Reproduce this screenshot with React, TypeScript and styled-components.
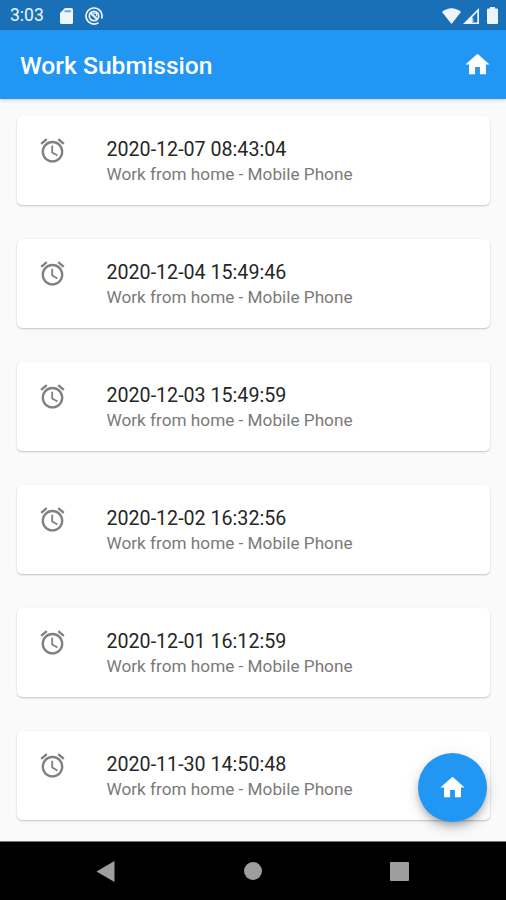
import React from "react";
import styled, { createGlobalStyle } from "styled-components";

const GlobalStyle = createGlobalStyle`
  * { box-sizing: border-box; }
  html, body { margin: 0; padding: 0; }
  body { background: #fafafa; font-family: Roboto, sans-serif; }
`;

const Screen = styled.div`
  position: relative;
  display: flex;
  flex-direction: column;
  width: 506px;
  height: 900px;
  overflow: hidden;
  background: #fafafa;
`;

const StatusBar = styled.div`
  display: flex;
  flex: none;
  align-items: center;
  justify-content: space-between;
  height: 30px;
  padding: 1px 8px 0 10px;
  background: #1a70b7;
  color: #edf5fb;
`;

const StatusGroup = styled.div`
  display: flex;
  align-items: center;
`;

const Clock = styled.span`
  width: 50px;
  font-size: 17.5px;
  line-height: 29px;
`;

const Glyph = styled.svg<{ $w: number; $h: number; $gap?: number }>`
  display: block;
  flex: none;
  width: ${(p) => p.$w}px;
  height: ${(p) => p.$h}px;
  margin-left: ${(p) => p.$gap ?? 0}px;
  fill: currentColor;
`;

const AppBar = styled.header`
  position: relative;
  display: flex;
  flex: none;
  align-items: center;
  justify-content: space-between;
  height: 69px;
  padding: 0 14px 0 20px;
  background: #2196f3;
  color: #fff;
  box-shadow: 0 1px 4px rgba(0, 0, 0, 0.2);
`;

const Title = styled.h1`
  margin: 0;
  padding-top: 2px;
  font-size: 24.65px;
  font-weight: 500;
  line-height: 32px;
`;

const List = styled.main`
  display: flex;
  flex: 1;
  flex-direction: column;
  gap: 34px;
  min-height: 0;
  padding: 17px 16px 0 17px;
  overflow: hidden;
`;

const Card = styled.article`
  display: flex;
  flex: none;
  height: 89px;
  padding: 20px 20.5px 0;
  background: #fff;
  border-radius: 5px;
  box-shadow: 0 1px 2px rgba(0, 0, 0, 0.22), 0 0 1px rgba(0, 0, 0, 0.04);
`;

const CardIcon = styled.div`
  width: 69px;
  color: #808080;
`;

const When = styled.div`
  padding-top: 1px;
  color: #262626;
  font-size: 19.65px;
  line-height: 26px;
`;

const Note = styled.div`
  color: #7a7a7a;
  font-size: 17.2px;
  line-height: 23px;
`;

const Fab = styled.button`
  position: absolute;
  right: 19px;
  bottom: 78px;
  display: flex;
  align-items: center;
  justify-content: center;
  width: 69px;
  height: 69px;
  padding: 0;
  border: 0;
  border-radius: 50%;
  background: #2196f3;
  color: #fff;
  box-shadow: 0 4px 6px -1px rgba(0, 0, 0, 0.2), 0 7px 12px rgba(0, 0, 0, 0.14),
    0 1px 20px rgba(0, 0, 0, 0.06);
`;

const NavBar = styled.nav`
  display: flex;
  flex: none;
  align-items: center;
  justify-content: space-between;
  height: 59px;
  padding: 0 97px 0 96px;
  border-top: 1px solid #777;
  background: #000;
  color: #9e9e9e;
`;

const entries = [
  "2020-12-07 08:43:04",
  "2020-12-04 15:49:46",
  "2020-12-03 15:49:59",
  "2020-12-02 16:32:56",
  "2020-12-01 16:12:59",
  "2020-11-30 14:50:48",
];

const HomeIcon = () => (
  <Glyph $w={29} $h={29} viewBox="0 0 24 24">
    <path d="M10 20v-6h4v6h5v-8h3L12 3 2 12h3v8z" />
  </Glyph>
);

const AlarmIcon = () => (
  <Glyph $w={29} $h={29} viewBox="0 0 24 24">
    <path d="M22 5.72l-4.6-3.86-1.29 1.53 4.6 3.86L22 5.72zM7.88 3.39L6.6 1.86 2 5.71l1.29 1.53 4.59-3.85zM12.5 8H11v6l4.75 2.85.75-1.23-4-2.37V8zM12 4c-4.97 0-9 4.03-9 9s4.02 9 9 9c4.97 0 9-4.03 9-9s-4.03-9-9-9zm0 16c-3.87 0-7-3.13-7-7s3.13-7 7-7 7 3.13 7 7-3.13 7-7 7z" />
  </Glyph>
);

export default function App() {
  return (
    <Screen>
      <GlobalStyle />
      <StatusBar>
        <StatusGroup>
          <Clock>3:03</Clock>
          <Glyph $w={13} $h={16} viewBox="0 0 13 16">
            <path d="M5 0h6.500Q13 0 13 1.500V14.500Q13 16 11.500 16H1.500Q0 16 0 14.500V5z" />
            <path d="M5 2.200h6v2H4z" fill="#1a70b7" opacity=".6" />
          </Glyph>
          <Glyph $w={18} $h={18} $gap={12} viewBox="0 0 18 18">
            <g fill="none" stroke="currentColor">
              <path d="M13.500 15.600A8 8 0 1 1 16.600 11.500" strokeWidth="1.700" />
              <circle cx="9" cy="9" r="4.700" strokeWidth="1.700" />
              <path d="M5.500 6l6.500 6" strokeWidth="2.200" />
              <path d="M8 6.200h3.500v3" strokeWidth="1.300" />
            </g>
          </Glyph>
        </StatusGroup>
        <StatusGroup>
          <Glyph $w={19} $h={16} viewBox="0 0 19 16">
            <path d="M0 4Q9.500-3.500 19 4L9.500 16z" />
          </Glyph>
          <Glyph $w={16} $h={16} $gap={2} viewBox="0 0 16 16">
            <path
              fillRule="evenodd"
              d="M16 0v16H0zM14.300 4L9 9.500v4.900h5.300z"
            />
            <path d="M9.800 9.800v4.600" stroke="currentColor" strokeWidth="1" />
          </Glyph>
          <Glyph $w={11} $h={17} $gap={8} viewBox="0 0 11 17">
            <path d="M3 0h5v1.500H10q1 0 1 1V16q0 1-1 1H1q-1 0-1-1V2.500q0-1 1-1h2z" />
          </Glyph>
        </StatusGroup>
      </StatusBar>
      <AppBar>
        <Title>Work Submission</Title>
        <HomeIcon />
      </AppBar>
      <List>
        {entries.map((time) => (
          <Card key={time}>
            <CardIcon>
              <AlarmIcon />
            </CardIcon>
            <div>
              <When>{time}</When>
              <Note>Work from home - Mobile Phone</Note>
            </div>
          </Card>
        ))}
      </List>
      <NavBar>
        <Glyph $w={19} $h={21} viewBox="0 0 19 21">
          <path d="M18.500 0v21L.5 10.500z" />
        </Glyph>
        <Glyph $w={18} $h={18} viewBox="0 0 18 18">
          <circle cx="9" cy="9" r="9" />
        </Glyph>
        <Glyph $w={19} $h={19} viewBox="0 0 19 19">
          <rect width="19" height="19" rx="1" />
        </Glyph>
      </NavBar>
      <Fab aria-label="Home">
        <HomeIcon />
      </Fab>
    </Screen>
  );
}
